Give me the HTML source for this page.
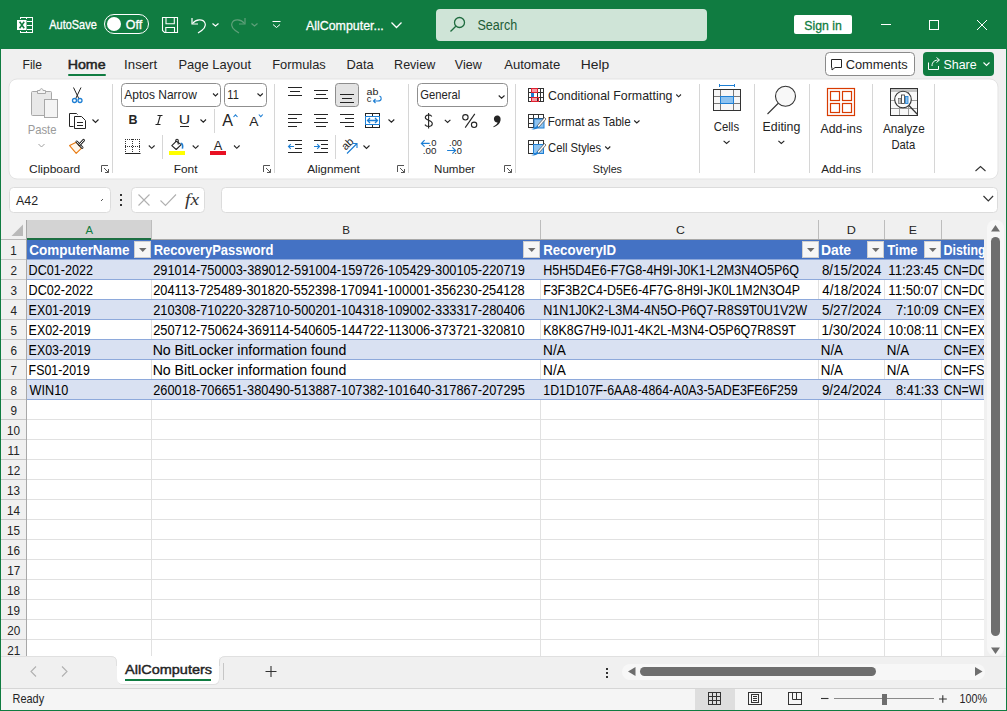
<!DOCTYPE html>
<html><head><meta charset="utf-8"><style>
html,body{margin:0;padding:0;width:1007px;height:711px;overflow:hidden;background:#f0f0f0}
svg{display:block}
text{font-family:"Liberation Sans",sans-serif}
</style></head><body>
<svg width="1007" height="711" viewBox="0 0 1007 711">
<rect x="0" y="0" width="1007" height="711" fill="#f0f0f0" />
<rect x="0" y="0" width="1007" height="49" fill="#107c41" />
<rect x="0" y="48" width="1" height="663" fill="#107c41" />
<rect x="1006" y="48" width="1" height="663" fill="#107c41" />
<rect x="0" y="710" width="1007" height="1" fill="#107c41" />
<rect x="20" y="17" width="13" height="16" fill="#fff"/><g fill="#107c41"><rect x="21" y="18" width="5" height="2"/><rect x="21" y="30" width="5" height="2"/><rect x="27" y="18" width="5" height="3"/><rect x="27" y="22" width="5" height="3"/><rect x="27" y="26" width="5" height="3"/><rect x="27" y="30" width="5" height="2"/></g><rect x="16" y="19" width="11" height="12" fill="#107c41"/><rect x="17" y="20" width="9.5" height="10" fill="#fff"/><path d="M19.6 21.8 L24.2 28.2 M24.2 21.8 L19.6 28.2" stroke="#107c41" stroke-width="1.5"/>
<text x="49.30" y="29.4" font-size="13.2" fill="#fff" textLength="47.41" lengthAdjust="spacingAndGlyphs" stroke="#fff" stroke-width="0.35">AutoSave</text>
<rect x="104.5" y="14.5" width="44" height="19" rx="9.5" fill="none" stroke="#fff" stroke-width="1"/>
<circle cx="114" cy="24" r="7" fill="#fff"/>
<text x="125.84" y="29.4" font-size="13.2" fill="#fff" textLength="16.40" lengthAdjust="spacingAndGlyphs" stroke="#fff" stroke-width="0.35">Off</text>
<g fill="none" stroke="#fff" stroke-width="1.1"><path d="M162.5 17.5 H177.5 V32.5 H164.5 L162.5 30.5 Z"/><path d="M166 17.5 V23.8 H174.3 V17.5"/><path d="M165.8 32.5 V27.5 H174.5 V32.5"/></g>
<g fill="none" stroke="#fff" stroke-width="1.2"><path d="M192 18 V24 H198"/><path d="M192.5 23.5 C196 19 203 18.5 205 23 C207 27 203 30 198 33"/><path d="M212.5 23.5 L215.5 26 L218.5 23.5"/></g>
<g fill="none" stroke="#5fa07a" stroke-width="1.2"><path d="M245 18 V24 H239"/><path d="M244.5 23.5 C241 19 234 18.5 232 23 C230 27 234 30 239 33"/><path d="M251.5 23.5 L254.5 26 L257.5 23.5"/></g>
<g fill="none" stroke="#fff" stroke-width="1"><line x1="272.5" y1="21.5" x2="280.5" y2="21.5"/><path d="M273 24.5 L276.5 27.5 L280 24.5"/></g>
<text x="306.00" y="30.3" font-size="13.4" fill="#fff" textLength="77.82" lengthAdjust="spacingAndGlyphs" stroke="#fff" stroke-width="0.3">AllComputer...</text>
<path d="M391.5 22.5 L396.5 27.5 L401.5 22.5" fill="none" stroke="#fff" stroke-width="1.3"/>
<rect x="436" y="9" width="271" height="32" rx="4" fill="#cfe4d7"/>
<g fill="none" stroke="#1e6b3e" stroke-width="1.3"><circle cx="459.5" cy="22.5" r="5"/><line x1="455.8" y1="26.2" x2="450.5" y2="31.5"/></g>
<text x="477.43" y="29.9" font-size="14" fill="#1e5c36" textLength="39.83" lengthAdjust="spacingAndGlyphs" >Search</text>
<rect x="794" y="15" width="58" height="19" fill="#fff" rx="2"/>
<text x="804.25" y="29.6" font-size="13.2" fill="#107c41" textLength="37.48" lengthAdjust="spacingAndGlyphs" stroke="#107c41" stroke-width="0.3">Sign in</text>
<g fill="none" stroke="#fff" stroke-width="1"><line x1="881" y1="24.5" x2="891" y2="24.5"/><rect x="929.5" y="20.5" width="9" height="9"/><path d="M977 20 L987 30 M987 20 L977 30"/></g>
<text x="22.53" y="69.1" font-size="13.2" fill="#242424" textLength="19.53" lengthAdjust="spacingAndGlyphs" >File</text>
<text x="124.11" y="69.1" font-size="13.2" fill="#242424" textLength="33.07" lengthAdjust="spacingAndGlyphs" >Insert</text>
<text x="178.47" y="69.1" font-size="13.2" fill="#242424" textLength="72.61" lengthAdjust="spacingAndGlyphs" >Page Layout</text>
<text x="272.17" y="69.1" font-size="13.2" fill="#242424" textLength="53.65" lengthAdjust="spacingAndGlyphs" >Formulas</text>
<text x="346.57" y="69.1" font-size="13.2" fill="#242424" textLength="27.16" lengthAdjust="spacingAndGlyphs" >Data</text>
<text x="394.10" y="69.1" font-size="13.2" fill="#242424" textLength="41.09" lengthAdjust="spacingAndGlyphs" >Review</text>
<text x="454.84" y="69.1" font-size="13.2" fill="#242424" textLength="26.86" lengthAdjust="spacingAndGlyphs" >View</text>
<text x="504.20" y="69.1" font-size="13.2" fill="#242424" textLength="55.99" lengthAdjust="spacingAndGlyphs" >Automate</text>
<text x="580.69" y="69.1" font-size="13.2" fill="#242424" textLength="28.49" lengthAdjust="spacingAndGlyphs" >Help</text>
<text x="67.66" y="69.1" font-size="13.2" fill="#242424" textLength="37.91" lengthAdjust="spacingAndGlyphs" stroke="#242424" stroke-width="0.5">Home</text>
<rect x="68" y="74" width="38" height="2" fill="#107c41" rx="1"/>
<rect x="825.5" y="52.5" width="89" height="23" rx="4" fill="#fff" stroke="#8a8a8a" stroke-width="1"/>
<path d="M831.5 59.5 H841.5 V67.5 H835 L832 70 V67.5 H831.5 Z" fill="none" stroke="#242424" stroke-width="1"/>
<text x="845.66" y="69.1" font-size="13.2" fill="#242424" textLength="62.09" lengthAdjust="spacingAndGlyphs" >Comments</text>
<rect x="923" y="52" width="71" height="24" fill="#107c41" rx="4"/>
<g fill="none" stroke="#fff" stroke-width="1"><path d="M928.5 62.5 V69.5 H938.5 V66"/><path d="M932 66 C932 61.5 935 60 939 60 M936.5 57.5 L939.5 60 L936.5 62.5"/></g>
<text x="943.44" y="69.1" font-size="13.2" fill="#fff" textLength="33.16" lengthAdjust="spacingAndGlyphs" >Share</text>
<path d="M983.5 62.5 L986.5 65.5 L989.5 62.5" fill="none" stroke="#fff" stroke-width="1.1"/>
<rect x="9" y="79" width="989" height="100" rx="8" fill="#fff" stroke="#e3e3e3" stroke-width="1"/>
<line x1="112.5" y1="84" x2="112.5" y2="173" stroke="#d6d6d6" stroke-width="1"/>
<line x1="274.5" y1="84" x2="274.5" y2="173" stroke="#d6d6d6" stroke-width="1"/>
<line x1="408.5" y1="84" x2="408.5" y2="173" stroke="#d6d6d6" stroke-width="1"/>
<line x1="515.5" y1="84" x2="515.5" y2="173" stroke="#d6d6d6" stroke-width="1"/>
<line x1="699.5" y1="84" x2="699.5" y2="173" stroke="#d6d6d6" stroke-width="1"/>
<line x1="754.5" y1="84" x2="754.5" y2="173" stroke="#d6d6d6" stroke-width="1"/>
<line x1="809.5" y1="84" x2="809.5" y2="173" stroke="#d6d6d6" stroke-width="1"/>
<line x1="872.5" y1="84" x2="872.5" y2="173" stroke="#d6d6d6" stroke-width="1"/>
<line x1="934.5" y1="84" x2="934.5" y2="173" stroke="#d6d6d6" stroke-width="1"/>
<text x="29.00" y="172.6" font-size="11.6" fill="#242424" textLength="51.28" lengthAdjust="spacingAndGlyphs" >Clipboard</text>
<text x="173.75" y="172.6" font-size="11.6" fill="#242424" textLength="23.72" lengthAdjust="spacingAndGlyphs" >Font</text>
<text x="307.20" y="172.6" font-size="11.6" fill="#242424" textLength="52.68" lengthAdjust="spacingAndGlyphs" >Alignment</text>
<text x="434.08" y="172.6" font-size="11.6" fill="#242424" textLength="41.12" lengthAdjust="spacingAndGlyphs" >Number</text>
<text x="592.82" y="172.6" font-size="11.6" fill="#242424" textLength="29.14" lengthAdjust="spacingAndGlyphs" >Styles</text>
<text x="821.30" y="172.6" font-size="11.6" fill="#242424" textLength="39.72" lengthAdjust="spacingAndGlyphs" >Add-ins</text>
<g fill="none" stroke="#555" stroke-width="1"><path d="M101.5 172 V165.5 H108"/><path d="M104 168 L108.5 172.5 M108.5 169 V172.5 H105"/></g>
<g fill="none" stroke="#555" stroke-width="1"><path d="M263.5 172 V165.5 H270"/><path d="M266 168 L270.5 172.5 M270.5 169 V172.5 H267"/></g>
<g fill="none" stroke="#555" stroke-width="1"><path d="M397.5 172 V165.5 H404"/><path d="M400 168 L404.5 172.5 M404.5 169 V172.5 H401"/></g>
<g fill="none" stroke="#555" stroke-width="1"><path d="M504.5 172 V165.5 H511"/><path d="M507 168 L511.5 172.5 M511.5 169 V172.5 H508"/></g>
<path d="M975.5 171 L980.5 166.5 L985.5 171" fill="none" stroke="#333" stroke-width="1.1"/>
<g fill="#e8e8e8" stroke="#a8a8a8" stroke-width="1"><rect x="31.5" y="91.5" width="20" height="24" rx="1"/><path d="M37.5 93.5 V90.5 H40 C40 88 43 88 43 90.5 H45.5 V93.5 Z" fill="#f4f4f4"/><rect x="44.5" y="99.5" width="13" height="18" fill="#f4f4f4"/></g>
<text x="27.70" y="133.8" font-size="12.4" fill="#9a9a9a" textLength="28.83" lengthAdjust="spacingAndGlyphs" >Paste</text>
<path d="M38.5 144 L41.5 147 L44.5 144" fill="none" stroke="#a0a0a0" stroke-width="1"/>
<g fill="none" stroke="#242424" stroke-width="1"><path d="M73.5 87.5 L79 99 M81 87.5 L75.5 99"/></g><g fill="none" stroke="#1e7fd4" stroke-width="1.3"><circle cx="74.5" cy="100.5" r="2"/><circle cx="80" cy="100.5" r="2"/></g>
<g fill="none" stroke="#242424" stroke-width="1"><path d="M73.5 126.5 H69.5 V113.5 H76.5 L77.5 114.5"/><path d="M74.5 116.5 H81.5 L85.5 120.5 V128.5 H74.5 Z"/><line x1="77" y1="122.5" x2="83" y2="122.5"/><line x1="77" y1="125.5" x2="83" y2="125.5"/></g><path d="M92.5 119.5 L95.5 122.5 L98.5 119.5" fill="none" stroke="#242424" stroke-width="1.1"/>
<path d="M76.3 142.3 L69.6 145.6 L76.2 153.3 L81.6 148.2 Z" fill="#fff6ea" stroke="#e8790f" stroke-width="1.1" stroke-linejoin="round"/><path d="M76.8 141.8 L82.2 147.6" stroke="#2a2a2a" stroke-width="2.6" stroke-linecap="round"/><path d="M76.8 141.8 L82.2 147.6" stroke="#fff" stroke-width="0.9" stroke-linecap="round"/><path d="M79.6 144.6 L83.6 140.2" stroke="#2a2a2a" stroke-width="2.8" stroke-linecap="round"/><path d="M79.6 144.6 L83.6 140.2" stroke="#fff" stroke-width="1" stroke-linecap="round"/>
<rect x="121.5" y="83.5" width="99" height="23" rx="4" fill="#fff" stroke="#8f8f8f" stroke-width="1"/>
<text x="124.30" y="99.1" font-size="12.6" fill="#242424" textLength="72.57" lengthAdjust="spacingAndGlyphs" >Aptos Narrow</text>
<path d="M213 93.5 L215.5 96 L218 93.5" fill="none" stroke="#242424" stroke-width="1.1"/>
<rect x="224.5" y="83.5" width="42" height="23" rx="4" fill="#fff" stroke="#8f8f8f" stroke-width="1"/>
<text x="227.37" y="99.1" font-size="12.6" fill="#242424" textLength="11.46" lengthAdjust="spacingAndGlyphs" >11</text>
<path d="M257.5 93.5 L260.2 96 L262.8 93.5" fill="none" stroke="#242424" stroke-width="1.1"/>
<text x="128.59" y="124.4" font-size="13" fill="#242424" font-weight="bold" textLength="9.00" lengthAdjust="spacingAndGlyphs" >B</text>
<path d="M157.5 115.5 H162.5 M155.5 124.5 H160.5 M160.3 115.5 L157.7 124.5" fill="none" stroke="#242424" stroke-width="1.1"/>
<text x="178.82" y="124.4" font-size="12.5" fill="#242424" textLength="11.40" lengthAdjust="spacingAndGlyphs" >U</text>
<line x1="180" y1="126.5" x2="189" y2="126.5" stroke="#242424" stroke-width="1"/>
<path d="M200.5 119.5 L203.3 122.2 L206 119.5" fill="none" stroke="#242424" stroke-width="1.1"/>
<line x1="214.5" y1="109" x2="214.5" y2="133" stroke="#d6d6d6"/>
<text x="222.30" y="126.1" font-size="16" fill="#242424" textLength="10.73" lengthAdjust="spacingAndGlyphs" >A</text>
<path d="M233.5 117 L235.5 114.8 L237.5 117" fill="none" stroke="#1e7fd4" stroke-width="1.1"/>
<text x="249.30" y="126.1" font-size="13.5" fill="#242424" textLength="9.23" lengthAdjust="spacingAndGlyphs" >A</text>
<path d="M258.8 114.5 L260.8 116.7 L262.8 114.5" fill="none" stroke="#1e7fd4" stroke-width="1.1"/>
<g fill="#333"><rect x="125" y="139" width="1" height="1"/><rect x="127" y="139" width="1" height="1"/><rect x="129" y="139" width="1" height="1"/><rect x="131" y="139" width="1" height="1"/><rect x="133" y="139" width="1" height="1"/><rect x="135" y="139" width="1" height="1"/><rect x="137" y="139" width="1" height="1"/><rect x="139" y="139" width="1" height="1"/><rect x="125" y="139" width="1" height="1"/><rect x="139" y="139" width="1" height="1"/><rect x="132" y="139" width="1" height="1"/><rect x="125" y="141" width="1" height="1"/><rect x="139" y="141" width="1" height="1"/><rect x="132" y="141" width="1" height="1"/><rect x="125" y="143" width="1" height="1"/><rect x="139" y="143" width="1" height="1"/><rect x="132" y="143" width="1" height="1"/><rect x="125" y="145" width="1" height="1"/><rect x="139" y="145" width="1" height="1"/><rect x="132" y="145" width="1" height="1"/><rect x="125" y="147" width="1" height="1"/><rect x="139" y="147" width="1" height="1"/><rect x="132" y="147" width="1" height="1"/><rect x="125" y="149" width="1" height="1"/><rect x="139" y="149" width="1" height="1"/><rect x="132" y="149" width="1" height="1"/><rect x="125" y="151" width="1" height="1"/><rect x="139" y="151" width="1" height="1"/><rect x="132" y="151" width="1" height="1"/><rect x="125" y="146" width="1" height="1"/><rect x="127" y="146" width="1" height="1"/><rect x="129" y="146" width="1" height="1"/><rect x="131" y="146" width="1" height="1"/><rect x="133" y="146" width="1" height="1"/><rect x="135" y="146" width="1" height="1"/><rect x="137" y="146" width="1" height="1"/><rect x="139" y="146" width="1" height="1"/></g><line x1="125" y1="153.5" x2="140.5" y2="153.5" stroke="#242424" stroke-width="1"/><path d="M148.8 145.5 L151.7 148.3 L154.6 145.5" fill="none" stroke="#242424" stroke-width="1.1"/>
<line x1="162.5" y1="135" x2="162.5" y2="159" stroke="#d6d6d6"/>
<path d="M171.8 145.7 L176.4 141.2 L181.2 144.6 L176.2 149.5 Z" fill="#fff" stroke="#242424" stroke-width="1.1" stroke-linejoin="round"/><path d="M175.8 142 V140.3 C175.8 138.8 178.2 138.8 178.2 140.3 V144.5" fill="none" stroke="#242424" stroke-width="1.1"/><path d="M180.8 143.3 C182.6 143.3 183 146 182.4 148.6" fill="none" stroke="#1e7fd4" stroke-width="1.6"/><rect x="169" y="151" width="16" height="4" fill="#ffff00"/><path d="M192.7 145.5 L195.6 148.3 L198.5 145.5" fill="none" stroke="#242424" stroke-width="1.1"/>
<text x="213.80" y="149.7" font-size="13.5" fill="#242424" textLength="8.53" lengthAdjust="spacingAndGlyphs" >A</text>
<rect x="210" y="151" width="16" height="4" fill="#e81123" />
<path d="M234 145.5 L236.8 148.3 L239.6 145.5" fill="none" stroke="#242424" stroke-width="1.1"/>
<line x1="288" y1="87.5" x2="302" y2="87.5" stroke="#242424" stroke-width="1"/>
<line x1="290" y1="91.5" x2="300" y2="91.5" stroke="#242424" stroke-width="1"/>
<line x1="288" y1="95.5" x2="302" y2="95.5" stroke="#242424" stroke-width="1"/>
<line x1="314" y1="90.5" x2="328" y2="90.5" stroke="#242424" stroke-width="1"/>
<line x1="316" y1="94.5" x2="326" y2="94.5" stroke="#242424" stroke-width="1"/>
<line x1="314" y1="98.5" x2="328" y2="98.5" stroke="#242424" stroke-width="1"/>
<rect x="335.5" y="83.5" width="23" height="23" rx="3" fill="#e3e3e3" stroke="#8d8d8d" stroke-width="1"/>
<line x1="340" y1="94.5" x2="354" y2="94.5" stroke="#242424" stroke-width="1"/>
<line x1="342" y1="98.5" x2="352" y2="98.5" stroke="#242424" stroke-width="1"/>
<line x1="340" y1="102.5" x2="354" y2="102.5" stroke="#242424" stroke-width="1"/>
<text x="366.57" y="95" font-size="9.5" fill="#242424" textLength="11.88" lengthAdjust="spacingAndGlyphs" >ab</text>
<text x="366.63" y="102.3" font-size="9.5" fill="#242424" textLength="4.60" lengthAdjust="spacingAndGlyphs" >c</text>
<path d="M379.5 96 C382 97 382 101 378 101 H373.5 M375.5 99 L373.5 101 L375.5 103" fill="none" stroke="#1e7fd4" stroke-width="1.1"/>
<line x1="288" y1="114.5" x2="302" y2="114.5" stroke="#242424" stroke-width="1"/>
<line x1="288" y1="118.5" x2="297" y2="118.5" stroke="#242424" stroke-width="1"/>
<line x1="288" y1="122.5" x2="302" y2="122.5" stroke="#242424" stroke-width="1"/>
<line x1="288" y1="126.5" x2="297" y2="126.5" stroke="#242424" stroke-width="1"/>
<line x1="314" y1="114.5" x2="328" y2="114.5" stroke="#242424" stroke-width="1"/>
<line x1="316" y1="118.5" x2="326" y2="118.5" stroke="#242424" stroke-width="1"/>
<line x1="314" y1="122.5" x2="328" y2="122.5" stroke="#242424" stroke-width="1"/>
<line x1="316" y1="126.5" x2="326" y2="126.5" stroke="#242424" stroke-width="1"/>
<line x1="340" y1="114.5" x2="354" y2="114.5" stroke="#242424" stroke-width="1"/>
<line x1="345" y1="118.5" x2="354" y2="118.5" stroke="#242424" stroke-width="1"/>
<line x1="340" y1="122.5" x2="354" y2="122.5" stroke="#242424" stroke-width="1"/>
<line x1="345" y1="126.5" x2="354" y2="126.5" stroke="#242424" stroke-width="1"/>
<g fill="none" stroke="#242424" stroke-width="1"><rect x="365.5" y="113.5" width="14" height="14"/><line x1="365" y1="116.5" x2="380" y2="116.5"/><line x1="365" y1="124.5" x2="380" y2="124.5"/></g><g stroke="#242424"><line x1="372.5" y1="113" x2="372.5" y2="116.5"/><line x1="372.5" y1="124.5" x2="372.5" y2="128"/></g><g fill="none" stroke="#1e7fd4" stroke-width="1"><rect x="365.5" y="116.5" width="14" height="8"/><path d="M367.5 120.5 H377.5 M370 118 L367.5 120.5 L370 123 M375 118 L377.5 120.5 L375 123" stroke-width="1.3"/></g><path d="M388.5 119.5 L391.4 122.2 L394.3 119.5" fill="none" stroke="#242424" stroke-width="1.1"/>
<line x1="288" y1="140.5" x2="302" y2="140.5" stroke="#242424" stroke-width="1"/>
<line x1="295" y1="144.5" x2="302" y2="144.5" stroke="#242424" stroke-width="1"/>
<line x1="295" y1="148.5" x2="302" y2="148.5" stroke="#242424" stroke-width="1"/>
<line x1="288" y1="152.5" x2="302" y2="152.5" stroke="#242424" stroke-width="1"/>
<path d="M294 146.5 H288.5 M290.8 144.2 L288.5 146.5 L290.8 148.8" fill="none" stroke="#1e7fd4" stroke-width="1.1"/>
<line x1="314" y1="140.5" x2="328" y2="140.5" stroke="#242424" stroke-width="1"/>
<line x1="321" y1="144.5" x2="328" y2="144.5" stroke="#242424" stroke-width="1"/>
<line x1="321" y1="148.5" x2="328" y2="148.5" stroke="#242424" stroke-width="1"/>
<line x1="314" y1="152.5" x2="328" y2="152.5" stroke="#242424" stroke-width="1"/>
<path d="M314 146.5 H319.5 M317.2 144.2 L319.5 146.5 L317.2 148.8" fill="none" stroke="#1e7fd4" stroke-width="1.1"/>
<line x1="335.5" y1="135" x2="335.5" y2="159" stroke="#d6d6d6"/>
<text x="347.5" y="147.5" font-size="11" fill="#242424" text-anchor="middle" transform="rotate(-45 347.5 144)">ab</text>
<path d="M347 153.5 L357 143.5 M352.5 143.5 H357 V148" fill="none" stroke="#1e7fd4" stroke-width="1.1"/>
<path d="M363.5 145.5 L366.5 148.5 L369.5 145.5" fill="none" stroke="#242424" stroke-width="1.1"/>
<rect x="417.5" y="83.5" width="90" height="23" rx="4" fill="#fff" stroke="#8f8f8f" stroke-width="1"/>
<text x="420.24" y="99.2" font-size="12.6" fill="#242424" textLength="39.92" lengthAdjust="spacingAndGlyphs" >General</text>
<path d="M498.7 95.5 L501.6 98.2 L504.5 95.5" fill="none" stroke="#242424" stroke-width="1.1"/>
<path d="M431.8 116.5 C430.5 114.2 425.3 114.3 425.3 117.6 C425.3 120.7 432.3 119.8 432.3 123.6 C432.3 127.2 426.5 127.3 424.9 124.6 M428.6 113 V128.6" fill="none" stroke="#242424" stroke-width="1.1"/>
<path d="M444.8 119.8 L447.6 122.5 L450.4 119.8" fill="none" stroke="#242424" stroke-width="1.1"/>
<g fill="none" stroke="#242424" stroke-width="1.1"><circle cx="465.4" cy="117.3" r="2.7"/><circle cx="474.1" cy="124.8" r="2.7"/><line x1="465.2" y1="127.6" x2="474.8" y2="113.9"/></g>
<path d="M497.2 115.6 C500 115.6 501 118 500.5 120.6 C500 123.6 497.5 126 493.6 127.3 L493.3 126.4 C495.8 125.3 497.3 123.6 497.6 122.4 C495.4 122.5 493.9 121 493.9 119 C493.9 117 495.3 115.6 497.2 115.6 Z" fill="#242424"/>
<text x="428.55" y="145.8" font-size="9.4" fill="#242424" textLength="7.87" lengthAdjust="spacingAndGlyphs" >.0</text>
<text x="422.82" y="153.9" font-size="9.4" fill="#242424" textLength="13.63" lengthAdjust="spacingAndGlyphs" >.00</text>
<path d="M429.7 143.4 H421.6 M424.6 140.2 L421.4 143.4 L424.6 146.6" fill="none" stroke="#1e7fd4" stroke-width="1.2"/>
<text x="449.07" y="145.8" font-size="9.4" fill="#242424" textLength="12.86" lengthAdjust="spacingAndGlyphs" >.00</text>
<text x="454.16" y="153.9" font-size="9.4" fill="#242424" textLength="7.75" lengthAdjust="spacingAndGlyphs" >.0</text>
<path d="M447.1 150.5 H455.4 M452.4 147.3 L455.6 150.5 L452.4 153.7" fill="none" stroke="#1e7fd4" stroke-width="1.2"/>
<rect x="532" y="89" width="5" height="3" fill="#f59aa4"/><rect x="532" y="98" width="6" height="3" fill="#f59aa4"/><g fill="none" stroke="#333" stroke-width="1"><rect x="528.5" y="88.5" width="15" height="13"/><line x1="531.5" y1="88" x2="531.5" y2="102"/><line x1="537.5" y1="88" x2="537.5" y2="102"/><line x1="540.5" y1="88" x2="540.5" y2="102"/><line x1="528" y1="92.5" x2="544" y2="92.5"/><line x1="528" y1="97.5" x2="544" y2="97.5"/></g><rect x="531.5" y="88.5" width="6" height="4" fill="none" stroke="#e02030"/><rect x="531.5" y="97.5" width="7" height="4" fill="none" stroke="#e02030"/><rect x="531" y="93" width="3" height="4" fill="#1e7fd4"/>
<text x="547.98" y="100.3" font-size="12.8" fill="#242424" textLength="124.43" lengthAdjust="spacingAndGlyphs" >Conditional Formatting</text>
<path d="M676.3 94.5 L678.6 96.8 L681 94.5" fill="none" stroke="#242424" stroke-width="1.1"/>
<g fill="none" stroke="#333" stroke-width="1"><rect x="528.5" y="114.5" width="15" height="13"/><line x1="533.5" y1="114" x2="533.5" y2="128"/><line x1="538.5" y1="114" x2="538.5" y2="119"/><line x1="528" y1="118.5" x2="544" y2="118.5"/><line x1="528" y1="123.5" x2="534" y2="123.5"/></g><rect x="534" y="119" width="10" height="9" fill="#8ec3f0" stroke="#1e7fd4"/><path d="M537 126 L544.5 117.5 L546 119 L538.5 127.5 Z" fill="#fff" stroke="#555" stroke-width="0.8"/><path d="M531 129 C533 129 535 128 537.5 125.5 L538.8 127 C537 129 534 130 531 129 Z" fill="#1e7fd4"/>
<text x="547.67" y="126.1" font-size="12.8" fill="#242424" textLength="82.97" lengthAdjust="spacingAndGlyphs" >Format as Table</text>
<path d="M634.2 120.5 L636.8 123 L639.5 120.5" fill="none" stroke="#242424" stroke-width="1.1"/>
<g fill="none" stroke="#333" stroke-width="1"><rect x="528.5" y="140.5" width="15" height="13"/><line x1="528" y1="144.5" x2="544" y2="144.5"/><line x1="533.5" y1="140" x2="533.5" y2="154"/><line x1="538.5" y1="140" x2="538.5" y2="144"/></g><rect x="533.5" y="144.5" width="10" height="9" fill="#8ec3f0" stroke="#1e7fd4"/><path d="M537 152 L544.5 143.5 L546 145 L538.5 153.5 Z" fill="#fff" stroke="#555" stroke-width="0.8"/><path d="M531 155 C533 155 535 154 537.5 151.5 L538.8 153 C537 155 534 156 531 155 Z" fill="#1e7fd4"/>
<text x="548.04" y="152" font-size="12.8" fill="#242424" textLength="53.14" lengthAdjust="spacingAndGlyphs" >Cell Styles</text>
<path d="M605.2 146.5 L607.8 149 L610.3 146.5" fill="none" stroke="#242424" stroke-width="1.1"/>
<rect x="714" y="90" width="26" height="20" fill="#f7f7f7"/><g fill="none" stroke="#777" stroke-width="1"><line x1="720.5" y1="89" x2="720.5" y2="111"/><line x1="733.5" y1="89" x2="733.5" y2="111"/><line x1="713" y1="96.5" x2="741" y2="96.5"/><line x1="713" y1="103.5" x2="741" y2="103.5"/></g><rect x="713.5" y="89.5" width="27" height="21" fill="none" stroke="#333"/><rect x="720.5" y="96.5" width="13" height="7" fill="#8ec3f0" stroke="#1e7fd4"/><path d="M719 85.5 H735 M719.5 84 V87 M734.5 84 V87" fill="none" stroke="#1e7fd4" stroke-width="1"/>
<text x="713.83" y="130.7" font-size="12.8" fill="#242424" textLength="25.24" lengthAdjust="spacingAndGlyphs" >Cells</text>
<path d="M723.6 140.8 L726.6 143.5 L729.6 140.8" fill="none" stroke="#242424" stroke-width="1.1"/>
<circle cx="785.5" cy="96.3" r="10" fill="#f8f8f8" stroke="#333" stroke-width="1.1"/><line x1="778" y1="103.5" x2="767.5" y2="114" stroke="#333" stroke-width="1.1"/>
<text x="762.61" y="130.7" font-size="12.8" fill="#242424" textLength="37.72" lengthAdjust="spacingAndGlyphs" >Editing</text>
<path d="M778.4 140.8 L781.3 143.5 L784.3 140.8" fill="none" stroke="#242424" stroke-width="1.1"/>
<g fill="none" stroke="#d83b01" stroke-width="1.2"><rect x="827.5" y="88.5" width="27" height="27"/><rect x="830.5" y="91.5" width="9" height="9"/><rect x="842.5" y="91.5" width="9" height="9"/><rect x="830.5" y="103.5" width="9" height="9"/><rect x="842.5" y="103.5" width="9" height="9"/></g>
<text x="820.50" y="132.6" font-size="12.8" fill="#242424" textLength="41.54" lengthAdjust="spacingAndGlyphs" >Add-ins</text>
<rect x="891" y="89" width="26" height="26" fill="#f8f8f8"/><g fill="none" stroke="#9a9a9a" stroke-width="1"><line x1="890" y1="100.5" x2="918" y2="100.5"/><line x1="890" y1="108.5" x2="918" y2="108.5"/><line x1="899.5" y1="92" x2="899.5" y2="116"/><line x1="908.5" y1="92" x2="908.5" y2="116"/></g><rect x="890.5" y="88.5" width="27" height="27" fill="none" stroke="#333" stroke-width="1"/><rect x="891" y="89" width="26" height="3" fill="#c4c4c4"/><circle cx="903" cy="99.5" r="8.3" fill="#fafafa" stroke="#333" stroke-width="1.1"/><line x1="909" y1="105.5" x2="917.5" y2="114.5" stroke="#333" stroke-width="1.2"/><rect x="898.5" y="98.5" width="2.5" height="5" fill="#c8c8c8" stroke="#555" stroke-width="0.6"/><rect x="901.5" y="95" width="3" height="8.5" fill="#fff" stroke="#333" stroke-width="0.8"/><rect x="905.5" y="96.5" width="2.5" height="7" fill="#8ec3f0" stroke="#1e7fd4" stroke-width="0.8"/>
<text x="883.00" y="132.6" font-size="12.8" fill="#242424" textLength="41.76" lengthAdjust="spacingAndGlyphs" >Analyze</text>
<text x="891.50" y="148.5" font-size="12.8" fill="#242424" textLength="23.72" lengthAdjust="spacingAndGlyphs" >Data</text>
<rect x="9.5" y="187.5" width="101" height="25" rx="4" fill="#fff" stroke="#dcdcdc" stroke-width="1"/>
<text x="16.00" y="205.1" font-size="13.4" fill="#242424" textLength="22.01" lengthAdjust="spacingAndGlyphs" >A42</text>
<path d="M101 201 L103 199" stroke="#555" stroke-width="1"/>
<g fill="#333"><rect x="120" y="194" width="2" height="2"/><rect x="120" y="199" width="2" height="2"/><rect x="120" y="204" width="2" height="2"/></g>
<rect x="131.5" y="187.5" width="73" height="25" rx="4" fill="#fff" stroke="#dcdcdc" stroke-width="1"/>
<path d="M138.5 194.5 L149.5 205.5 M149.5 194.5 L138.5 205.5" stroke="#b0b0b0" stroke-width="1.1"/>
<path d="M160.5 200.5 L165.5 205.5 L176 194.5" fill="none" stroke="#b0b0b0" stroke-width="1.1"/>
<text x="185" y="205" style="font-family:Liberation Serif,serif" font-style="italic" font-size="17" fill="#333" textLength="14" lengthAdjust="spacingAndGlyphs">fx</text>
<rect x="221.5" y="187.5" width="776" height="25" rx="4" fill="#fff" stroke="#dcdcdc" stroke-width="1"/>
<path d="M983.5 196 L988.3 200.8 L993.1 196" fill="none" stroke="#333" stroke-width="1.2"/>
<rect x="1" y="220" width="983" height="20" fill="#f0f0f0" />
<rect x="27" y="220" width="124" height="19" fill="#d3d3d3" />
<rect x="27" y="238" width="124" height="2" fill="#1d6f42" />
<path d="M11.5 236 L23 236 L23 224.5 Z" fill="#b9b9b9"/>
<line x1="151.5" y1="220" x2="151.5" y2="239" stroke="#bdbdbd"/>
<line x1="540.5" y1="220" x2="540.5" y2="239" stroke="#bdbdbd"/>
<line x1="818.5" y1="220" x2="818.5" y2="239" stroke="#bdbdbd"/>
<line x1="884.5" y1="220" x2="884.5" y2="239" stroke="#bdbdbd"/>
<line x1="941.5" y1="220" x2="941.5" y2="239" stroke="#bdbdbd"/>
<line x1="151" y1="239.5" x2="984" y2="239.5" stroke="#a8a8a8"/>
<text x="85.40" y="233.9" font-size="11.6" fill="#107c41" textLength="7.52" lengthAdjust="spacingAndGlyphs" >A</text>
<text x="342.17" y="233.9" font-size="11.6" fill="#242424" textLength="7.73" lengthAdjust="spacingAndGlyphs" >B</text>
<text x="676.09" y="233.9" font-size="11.6" fill="#242424" textLength="8.87" lengthAdjust="spacingAndGlyphs" >C</text>
<text x="846.69" y="233.9" font-size="11.6" fill="#242424" textLength="9.10" lengthAdjust="spacingAndGlyphs" >D</text>
<text x="908.72" y="233.9" font-size="11.6" fill="#242424" textLength="8.20" lengthAdjust="spacingAndGlyphs" >E</text>
<rect x="1" y="240" width="26" height="416" fill="#f0f0f0" />
<line x1="26.5" y1="220" x2="26.5" y2="656" stroke="#a8a8a8"/>
<line x1="1" y1="239.5" x2="26" y2="239.5" stroke="#b8b8b8"/>
<rect x="27" y="240" width="957" height="416" fill="#fff" />
<g stroke="#e1e1e1">
<line x1="27" y1="259.5" x2="984" y2="259.5"/>
<line x1="27" y1="279.5" x2="984" y2="279.5"/>
<line x1="27" y1="299.5" x2="984" y2="299.5"/>
<line x1="27" y1="319.5" x2="984" y2="319.5"/>
<line x1="27" y1="339.5" x2="984" y2="339.5"/>
<line x1="27" y1="359.5" x2="984" y2="359.5"/>
<line x1="27" y1="379.5" x2="984" y2="379.5"/>
<line x1="27" y1="399.5" x2="984" y2="399.5"/>
<line x1="27" y1="419.5" x2="984" y2="419.5"/>
<line x1="27" y1="439.5" x2="984" y2="439.5"/>
<line x1="27" y1="459.5" x2="984" y2="459.5"/>
<line x1="27" y1="479.5" x2="984" y2="479.5"/>
<line x1="27" y1="499.5" x2="984" y2="499.5"/>
<line x1="27" y1="519.5" x2="984" y2="519.5"/>
<line x1="27" y1="539.5" x2="984" y2="539.5"/>
<line x1="27" y1="559.5" x2="984" y2="559.5"/>
<line x1="27" y1="579.5" x2="984" y2="579.5"/>
<line x1="27" y1="599.5" x2="984" y2="599.5"/>
<line x1="27" y1="619.5" x2="984" y2="619.5"/>
<line x1="27" y1="639.5" x2="984" y2="639.5"/>
<line x1="27" y1="659.5" x2="984" y2="659.5"/>
<line x1="151.5" y1="240" x2="151.5" y2="656"/>
<line x1="540.5" y1="240" x2="540.5" y2="656"/>
<line x1="818.5" y1="240" x2="818.5" y2="656"/>
<line x1="884.5" y1="240" x2="884.5" y2="656"/>
<line x1="941.5" y1="240" x2="941.5" y2="656"/>
</g>
<g stroke="#c8c8c8">
<line x1="1" y1="259.5" x2="26" y2="259.5"/>
<line x1="1" y1="279.5" x2="26" y2="279.5"/>
<line x1="1" y1="299.5" x2="26" y2="299.5"/>
<line x1="1" y1="319.5" x2="26" y2="319.5"/>
<line x1="1" y1="339.5" x2="26" y2="339.5"/>
<line x1="1" y1="359.5" x2="26" y2="359.5"/>
<line x1="1" y1="379.5" x2="26" y2="379.5"/>
<line x1="1" y1="399.5" x2="26" y2="399.5"/>
<line x1="1" y1="419.5" x2="26" y2="419.5"/>
<line x1="1" y1="439.5" x2="26" y2="439.5"/>
<line x1="1" y1="459.5" x2="26" y2="459.5"/>
<line x1="1" y1="479.5" x2="26" y2="479.5"/>
<line x1="1" y1="499.5" x2="26" y2="499.5"/>
<line x1="1" y1="519.5" x2="26" y2="519.5"/>
<line x1="1" y1="539.5" x2="26" y2="539.5"/>
<line x1="1" y1="559.5" x2="26" y2="559.5"/>
<line x1="1" y1="579.5" x2="26" y2="579.5"/>
<line x1="1" y1="599.5" x2="26" y2="599.5"/>
<line x1="1" y1="619.5" x2="26" y2="619.5"/>
<line x1="1" y1="639.5" x2="26" y2="639.5"/>
<line x1="1" y1="659.5" x2="26" y2="659.5"/>
</g>
<rect x="27" y="240" width="957" height="19" fill="#4472c4" />
<rect x="27" y="260" width="957" height="19" fill="#d9e1f2" />
<line x1="27" y1="279.5" x2="984" y2="279.5" stroke="#8ea9db"/>
<line x1="27" y1="299.5" x2="984" y2="299.5" stroke="#8ea9db"/>
<rect x="27" y="300" width="957" height="19" fill="#d9e1f2" />
<line x1="27" y1="319.5" x2="984" y2="319.5" stroke="#8ea9db"/>
<line x1="27" y1="339.5" x2="984" y2="339.5" stroke="#8ea9db"/>
<rect x="27" y="340" width="957" height="19" fill="#d9e1f2" />
<line x1="27" y1="359.5" x2="984" y2="359.5" stroke="#8ea9db"/>
<line x1="27" y1="379.5" x2="984" y2="379.5" stroke="#8ea9db"/>
<rect x="27" y="380" width="957" height="19" fill="#d9e1f2" />
<line x1="27" y1="399.5" x2="984" y2="399.5" stroke="#8ea9db"/>
<line x1="27" y1="259.5" x2="984" y2="259.5" stroke="#8ea9db"/>
<text x="10.37" y="255.3" font-size="12.2" fill="#242424" textLength="6.52" lengthAdjust="spacingAndGlyphs" >1</text>
<text x="10.55" y="275.3" font-size="12.2" fill="#242424" textLength="6.52" lengthAdjust="spacingAndGlyphs" >2</text>
<text x="10.55" y="295.3" font-size="12.2" fill="#242424" textLength="6.52" lengthAdjust="spacingAndGlyphs" >3</text>
<text x="10.61" y="315.3" font-size="12.2" fill="#242424" textLength="6.52" lengthAdjust="spacingAndGlyphs" >4</text>
<text x="10.55" y="335.3" font-size="12.2" fill="#242424" textLength="6.52" lengthAdjust="spacingAndGlyphs" >5</text>
<text x="10.49" y="355.3" font-size="12.2" fill="#242424" textLength="6.52" lengthAdjust="spacingAndGlyphs" >6</text>
<text x="10.55" y="375.3" font-size="12.2" fill="#242424" textLength="6.52" lengthAdjust="spacingAndGlyphs" >7</text>
<text x="10.52" y="395.3" font-size="12.2" fill="#242424" textLength="6.52" lengthAdjust="spacingAndGlyphs" >8</text>
<text x="10.55" y="415.3" font-size="12.2" fill="#242424" textLength="6.52" lengthAdjust="spacingAndGlyphs" >9</text>
<text x="7.06" y="435.3" font-size="12.2" fill="#242424" textLength="13.03" lengthAdjust="spacingAndGlyphs" >10</text>
<text x="7.56" y="455.3" font-size="12.2" fill="#242424" textLength="12.16" lengthAdjust="spacingAndGlyphs" >11</text>
<text x="7.15" y="475.3" font-size="12.2" fill="#242424" textLength="13.03" lengthAdjust="spacingAndGlyphs" >12</text>
<text x="7.09" y="495.3" font-size="12.2" fill="#242424" textLength="13.03" lengthAdjust="spacingAndGlyphs" >13</text>
<text x="7.03" y="515.3" font-size="12.2" fill="#242424" textLength="13.03" lengthAdjust="spacingAndGlyphs" >14</text>
<text x="7.09" y="535.3" font-size="12.2" fill="#242424" textLength="13.03" lengthAdjust="spacingAndGlyphs" >15</text>
<text x="7.09" y="555.3" font-size="12.2" fill="#242424" textLength="13.03" lengthAdjust="spacingAndGlyphs" >16</text>
<text x="7.15" y="575.3" font-size="12.2" fill="#242424" textLength="13.03" lengthAdjust="spacingAndGlyphs" >17</text>
<text x="7.09" y="595.3" font-size="12.2" fill="#242424" textLength="13.03" lengthAdjust="spacingAndGlyphs" >18</text>
<text x="7.12" y="615.3" font-size="12.2" fill="#242424" textLength="13.03" lengthAdjust="spacingAndGlyphs" >19</text>
<text x="7.21" y="635.3" font-size="12.2" fill="#242424" textLength="13.03" lengthAdjust="spacingAndGlyphs" >20</text>
<text x="7.27" y="655.3" font-size="12.2" fill="#242424" textLength="13.03" lengthAdjust="spacingAndGlyphs" >21</text>
<text x="29.26" y="254.7" font-size="14.4" fill="#fff" font-weight="bold" textLength="100.32" lengthAdjust="spacingAndGlyphs" >ComputerName</text>
<text x="153.76" y="254.7" font-size="14.4" fill="#fff" font-weight="bold" textLength="119.72" lengthAdjust="spacingAndGlyphs" >RecoveryPassword</text>
<text x="543.14" y="254.7" font-size="14.4" fill="#fff" font-weight="bold" textLength="72.93" lengthAdjust="spacingAndGlyphs" >RecoveryID</text>
<text x="820.89" y="254.7" font-size="14.4" fill="#fff" font-weight="bold" textLength="30.23" lengthAdjust="spacingAndGlyphs" >Date</text>
<text x="887.37" y="254.7" font-size="14.4" fill="#fff" font-weight="bold" textLength="30.20" lengthAdjust="spacingAndGlyphs" >Time</text>
<svg x="941" y="240" width="43" height="20" overflow="hidden">
<text x="2.60" y="14.699999999999989" font-size="14.4" fill="#fff" font-weight="bold" textLength="115.61" lengthAdjust="spacingAndGlyphs" >DistinguishedName</text>
</svg>
<rect x="134.5" y="241.5" width="16" height="16" fill="#f6f6f6" stroke="#cfcfcf"/>
<path d="M139 248 H146.5 L142.75 252 Z" fill="#6b6b6b"/>
<rect x="523.5" y="241.5" width="16" height="16" fill="#f6f6f6" stroke="#cfcfcf"/>
<path d="M528 248 H535.5 L531.75 252 Z" fill="#6b6b6b"/>
<rect x="802.5" y="241.5" width="16" height="16" fill="#f6f6f6" stroke="#cfcfcf"/>
<path d="M807 248 H814.5 L810.75 252 Z" fill="#6b6b6b"/>
<rect x="867.5" y="241.5" width="16" height="16" fill="#f6f6f6" stroke="#cfcfcf"/>
<path d="M872 248 H879.5 L875.75 252 Z" fill="#6b6b6b"/>
<rect x="924.5" y="241.5" width="16" height="16" fill="#f6f6f6" stroke="#cfcfcf"/>
<path d="M929 248 H936.5 L932.75 252 Z" fill="#6b6b6b"/>
<text x="28.59" y="274.5" font-size="14.2" fill="#000" textLength="64.33" lengthAdjust="spacingAndGlyphs" >DC01-2022</text>
<text x="153.16" y="274.5" font-size="14.2" fill="#000" textLength="371.65" lengthAdjust="spacingAndGlyphs" >291014-750003-389012-591004-159726-105429-300105-220719</text>
<text x="543.20" y="274.5" font-size="14.2" fill="#000" textLength="255.91" lengthAdjust="spacingAndGlyphs" >H5H5D4E6-F7G8-4H9I-J0K1-L2M3N4O5P6Q</text>
<text x="821.90" y="274.5" font-size="14.2" fill="#000" textLength="59.59" lengthAdjust="spacingAndGlyphs" >8/15/2024</text>
<text x="888.31" y="274.5" font-size="14.2" fill="#000" textLength="50.26" lengthAdjust="spacingAndGlyphs" >11:23:45</text>
<svg x="941" y="0" width="43" height="711" overflow="hidden">
<text x="2.78" y="274.5" font-size="14.2" fill="#000" textLength="191.56" lengthAdjust="spacingAndGlyphs" >CN=DC01,OU=Domain Controllers</text>
</svg>
<text x="28.59" y="294.5" font-size="14.2" fill="#000" textLength="64.33" lengthAdjust="spacingAndGlyphs" >DC02-2022</text>
<text x="153.16" y="294.5" font-size="14.2" fill="#000" textLength="371.60" lengthAdjust="spacingAndGlyphs" >204113-725489-301820-552398-170941-100001-356230-254128</text>
<text x="543.21" y="294.5" font-size="14.2" fill="#000" textLength="256.83" lengthAdjust="spacingAndGlyphs" >F3F3B2C4-D5E6-4F7G-8H9I-JK0L1M2N3O4P</text>
<text x="822.23" y="294.5" font-size="14.2" fill="#000" textLength="59.25" lengthAdjust="spacingAndGlyphs" >4/18/2024</text>
<text x="888.31" y="294.5" font-size="14.2" fill="#000" textLength="50.40" lengthAdjust="spacingAndGlyphs" >11:50:07</text>
<svg x="941" y="0" width="43" height="711" overflow="hidden">
<text x="2.78" y="294.5" font-size="14.2" fill="#000" textLength="191.56" lengthAdjust="spacingAndGlyphs" >CN=DC02,OU=Domain Controllers</text>
</svg>
<text x="28.61" y="314.5" font-size="14.2" fill="#000" textLength="62.14" lengthAdjust="spacingAndGlyphs" >EX01-2019</text>
<text x="153.16" y="314.5" font-size="14.2" fill="#000" textLength="371.59" lengthAdjust="spacingAndGlyphs" >210308-710220-328710-500201-104318-109002-333317-280406</text>
<text x="543.19" y="314.5" font-size="14.2" fill="#000" textLength="264.05" lengthAdjust="spacingAndGlyphs" >N1N1J0K2-L3M4-4N5O-P6Q7-R8S9T0U1V2W</text>
<text x="821.96" y="314.5" font-size="14.2" fill="#000" textLength="59.52" lengthAdjust="spacingAndGlyphs" >5/27/2024</text>
<text x="895.96" y="314.5" font-size="14.2" fill="#000" textLength="42.63" lengthAdjust="spacingAndGlyphs" >7:10:09</text>
<svg x="941" y="0" width="43" height="711" overflow="hidden">
<text x="2.78" y="314.5" font-size="14.2" fill="#000" textLength="127.02" lengthAdjust="spacingAndGlyphs" >CN=EX01,OU=Servers</text>
</svg>
<text x="28.61" y="334.5" font-size="14.2" fill="#000" textLength="62.14" lengthAdjust="spacingAndGlyphs" >EX02-2019</text>
<text x="153.16" y="334.5" font-size="14.2" fill="#000" textLength="371.48" lengthAdjust="spacingAndGlyphs" >250712-750624-369114-540605-144722-113006-373721-320810</text>
<text x="543.20" y="334.5" font-size="14.2" fill="#000" textLength="252.78" lengthAdjust="spacingAndGlyphs" >K8K8G7H9-I0J1-4K2L-M3N4-O5P6Q7R8S9T</text>
<text x="821.49" y="334.5" font-size="14.2" fill="#000" textLength="60.00" lengthAdjust="spacingAndGlyphs" >1/30/2024</text>
<text x="888.31" y="334.5" font-size="14.2" fill="#000" textLength="50.33" lengthAdjust="spacingAndGlyphs" >10:08:11</text>
<svg x="941" y="0" width="43" height="711" overflow="hidden">
<text x="2.78" y="334.5" font-size="14.2" fill="#000" textLength="127.02" lengthAdjust="spacingAndGlyphs" >CN=EX02,OU=Servers</text>
</svg>
<text x="28.61" y="354.5" font-size="14.2" fill="#000" textLength="62.14" lengthAdjust="spacingAndGlyphs" >EX03-2019</text>
<text x="152.67" y="354.5" font-size="14.2" fill="#000" textLength="193.64" lengthAdjust="spacingAndGlyphs" >No BitLocker information found</text>
<text x="543.11" y="354.5" font-size="14.2" fill="#000" textLength="22.72" lengthAdjust="spacingAndGlyphs" >N/A</text>
<text x="820.73" y="354.5" font-size="14.2" fill="#000" textLength="22.30" lengthAdjust="spacingAndGlyphs" >N/A</text>
<text x="886.83" y="354.5" font-size="14.2" fill="#000" textLength="22.30" lengthAdjust="spacingAndGlyphs" >N/A</text>
<svg x="941" y="0" width="43" height="711" overflow="hidden">
<text x="2.78" y="354.5" font-size="14.2" fill="#000" textLength="127.02" lengthAdjust="spacingAndGlyphs" >CN=EX03,OU=Servers</text>
</svg>
<text x="28.61" y="374.5" font-size="14.2" fill="#000" textLength="61.18" lengthAdjust="spacingAndGlyphs" >FS01-2019</text>
<text x="152.67" y="374.5" font-size="14.2" fill="#000" textLength="193.64" lengthAdjust="spacingAndGlyphs" >No BitLocker information found</text>
<text x="543.11" y="374.5" font-size="14.2" fill="#000" textLength="22.72" lengthAdjust="spacingAndGlyphs" >N/A</text>
<text x="820.73" y="374.5" font-size="14.2" fill="#000" textLength="22.30" lengthAdjust="spacingAndGlyphs" >N/A</text>
<text x="886.83" y="374.5" font-size="14.2" fill="#000" textLength="22.30" lengthAdjust="spacingAndGlyphs" >N/A</text>
<svg x="941" y="0" width="43" height="711" overflow="hidden">
<text x="2.78" y="374.5" font-size="14.2" fill="#000" textLength="126.33" lengthAdjust="spacingAndGlyphs" >CN=FS01,OU=Servers</text>
</svg>
<text x="29.54" y="394.5" font-size="14.2" fill="#000" textLength="38.72" lengthAdjust="spacingAndGlyphs" >WIN10</text>
<text x="153.16" y="394.5" font-size="14.2" fill="#000" textLength="371.59" lengthAdjust="spacingAndGlyphs" >260018-706651-380490-513887-107382-101640-317867-207295</text>
<text x="543.27" y="394.5" font-size="14.2" fill="#000" textLength="254.42" lengthAdjust="spacingAndGlyphs" >1D1D107F-6AA8-4864-A0A3-5ADE3FE6F259</text>
<text x="821.90" y="394.5" font-size="14.2" fill="#000" textLength="59.59" lengthAdjust="spacingAndGlyphs" >9/24/2024</text>
<text x="896.03" y="394.5" font-size="14.2" fill="#000" textLength="42.50" lengthAdjust="spacingAndGlyphs" >8:41:33</text>
<svg x="941" y="0" width="43" height="711" overflow="hidden">
<text x="2.78" y="394.5" font-size="14.2" fill="#000" textLength="152.41" lengthAdjust="spacingAndGlyphs" >CN=WIN10,OU=Computers</text>
</svg>
<rect x="984" y="220" width="22" height="436" fill="#f0f0f0" />
<rect x="987" y="220" width="17" height="436" rx="8" fill="#f7f7f7"/>
<path d="M991 231.5 L995.5 225 L1000 231.5 Z" fill="#6e6e6e"/>
<rect x="991" y="237" width="9" height="399" rx="4.5" fill="#6e6e6e"/>
<path d="M991 647.5 L995.5 654 L1000 647.5 Z" fill="#6e6e6e"/>
<rect x="1" y="656" width="1005" height="32" fill="#f0f0f0" />
<rect x="105" y="656" width="125" height="8" fill="#fff" />
<path d="M1 656 H111 Q117 656 117 662 V688 H1 Z" fill="#f0f0f0"/>
<path d="M1006 656 H225 Q219 656 219 662 V688 H1006 Z" fill="#f0f0f0"/>
<path d="M1 656.5 H111 Q116.5 656.5 116.5 662 V666 M1006 656.5 H225 Q219.5 656.5 219.5 662 V666" fill="none" stroke="#e0e0e0" stroke-width="1"/>
<path d="M117 656 H219 V678 Q219 684 213 684 H123 Q117 684 117 678 Z" fill="#000" opacity="0.06" transform="translate(0.5 1)"/>
<path d="M36 666.5 L31 671.5 L36 676.5" fill="none" stroke="#b0b0b0" stroke-width="1.1"/>
<path d="M62 666.5 L67 671.5 L62 676.5" fill="none" stroke="#b0b0b0" stroke-width="1.1"/>
<path d="M117 656 H219 V678 Q219 684 213 684 H123 Q117 684 117 678 Z" fill="#fff"/>
<text x="125.10" y="674.2" font-size="13.6" fill="#242424" textLength="86.94" lengthAdjust="spacingAndGlyphs" stroke="#242424" stroke-width="0.45">AllComputers</text>
<rect x="125" y="679" width="86" height="2" fill="#107c41" />
<line x1="223.5" y1="663" x2="223.5" y2="680" stroke="#c6c6c6"/>
<path d="M271 666 V677 M265.5 671.5 H276.5" stroke="#333" stroke-width="1.1"/>
<g fill="#333"><rect x="606" y="668" width="2" height="2"/><rect x="606" y="672" width="2" height="2"/><rect x="606" y="676" width="2" height="2"/></g>
<rect x="622" y="664" width="363" height="16" rx="8" fill="#f7f7f7"/>
<path d="M635.5 667 L628 671.5 L635.5 676 Z" fill="#6e6e6e"/>
<rect x="640" y="667" width="236" height="9" rx="4.5" fill="#6e6e6e"/>
<path d="M975 667 L982.5 671.5 L975 676 Z" fill="#6e6e6e"/>
<line x1="1" y1="688.5" x2="1006" y2="688.5" stroke="#d6d6d6"/>
<rect x="1" y="689" width="1005" height="21" fill="#f5f5f5" />
<text x="12.53" y="703.1" font-size="12.4" fill="#242424" textLength="31.58" lengthAdjust="spacingAndGlyphs" >Ready</text>
<rect x="695" y="689" width="40" height="21" fill="#dedede" />
<g fill="none" stroke="#333" stroke-width="1"><rect x="708.5" y="692.5" width="12" height="12"/><line x1="712.5" y1="692" x2="712.5" y2="705"/><line x1="716.5" y1="692" x2="716.5" y2="705"/><line x1="708" y1="696.5" x2="721" y2="696.5"/><line x1="708" y1="700.5" x2="721" y2="700.5"/></g>
<g fill="none" stroke="#333" stroke-width="1"><rect x="748.5" y="692.5" width="13" height="12"/><rect x="751.5" y="694.5" width="7" height="8"/><line x1="753" y1="696.5" x2="757" y2="696.5"/><line x1="753" y1="698.5" x2="757" y2="698.5"/><line x1="753" y1="700.5" x2="757" y2="700.5"/></g>
<g fill="none" stroke="#333" stroke-width="1"><rect x="788.5" y="692.5" width="13" height="12"/><path d="M792.5 692.5 V699.5 H801.5 M796.5 692.5 V699.5"/></g>
<line x1="821" y1="698.5" x2="828.5" y2="698.5" stroke="#333" stroke-width="1.1"/>
<line x1="834" y1="698.5" x2="934" y2="698.5" stroke="#8a8a8a"/>
<rect x="882" y="694" width="5" height="11" fill="#6e6e6e" />
<path d="M942.8 695.3 V702.7 M939 699 H946.8" stroke="#333" stroke-width="1.1"/>
<text x="959.49" y="703" font-size="12.4" fill="#242424" textLength="27.46" lengthAdjust="spacingAndGlyphs" >100%</text>
</svg>
</body></html>
